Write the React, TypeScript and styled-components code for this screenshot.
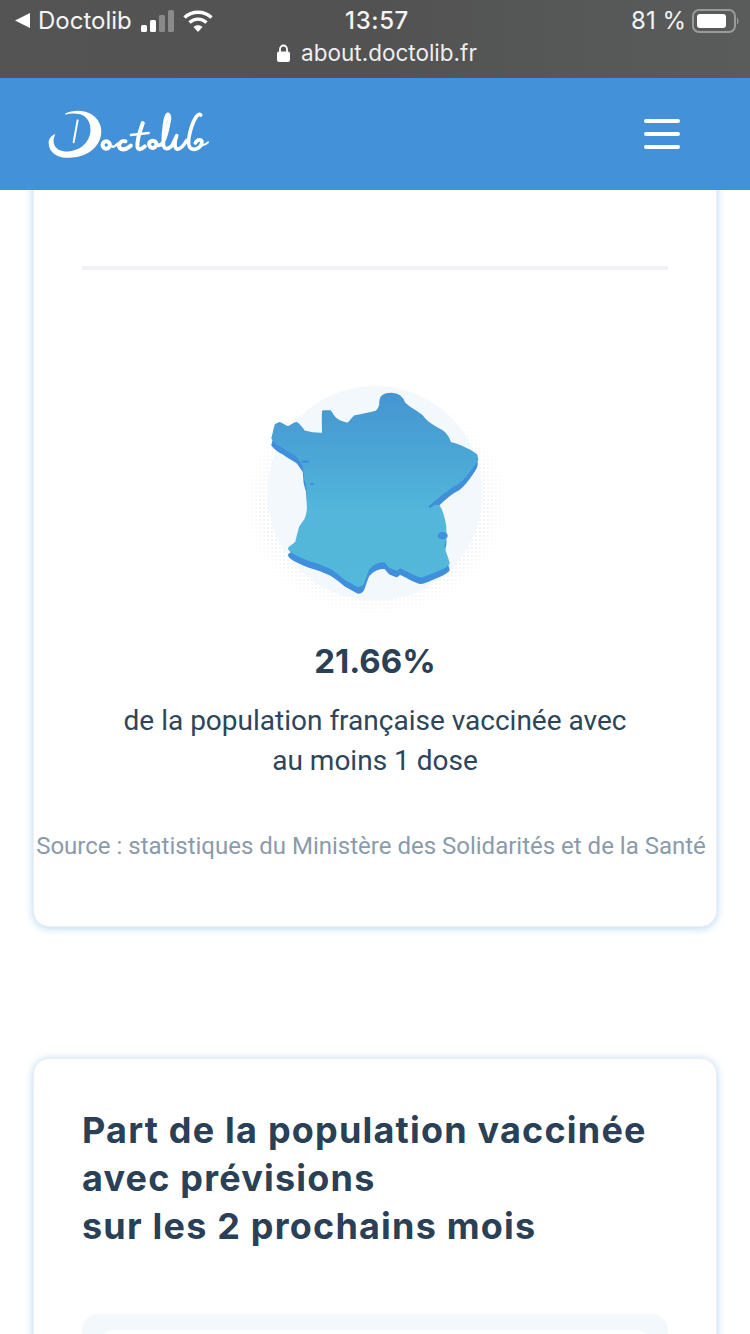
import React, { FC } from 'react';
import styled, { createGlobalStyle } from 'styled-components';

const GlobalStyle = createGlobalStyle`
	html, body {
		margin: 0;
		padding: 0;
		height: 100%;
		overflow: hidden;
		background: #fff;
	}
	* {
		box-sizing: border-box;
	}
`;

const Screen = styled.div`
	width: 750px;
	height: 1334px;
	display: flex;
	flex-direction: column;
	overflow: hidden;
	font-family: Roboto, 'Liberation Sans', sans-serif;
	background: #fff;
`;

const StatusBar = styled.div`
	height: 78px;
	flex: none;
	padding: 6px 11px 0 15px;
	color: #f4f4f4;
	background: linear-gradient(90deg, #545454, #525252 50%, #5a5c5c);
	font-family: Inter, 'Liberation Sans', sans-serif;
`;

const StatusRow = styled.div`
	display: grid;
	grid-template-columns: 1fr auto 1fr;
	align-items: center;
	height: 28px;
	font-size: 24px;
`;

const Carrier = styled.div`
	display: flex;
	align-items: center;
	gap: 8px;
`;

const Time = styled.div`
	font-weight: 500;
	letter-spacing: 0.6px;
`;

const Battery = styled.div`
	display: flex;
	align-items: center;
	justify-content: flex-end;
	gap: 6px;
`;

const AddressRow = styled.div`
	display: flex;
	align-items: center;
	justify-content: center;
	gap: 11px;
	margin-top: 5px;
	font-size: 22.5px;
	font-family: Inter, 'Liberation Sans', sans-serif;
	color: #eeeeee;
`;

const Header = styled.header`
	height: 112px;
	flex: none;
	display: flex;
	align-items: center;
	justify-content: space-between;
	padding: 0 70px 0 47px;
	background: #4291d9;
`;

const Burger = styled.div`
	display: flex;
	flex-direction: column;
	gap: 9px;
	width: 36px;
`;

const BurgerBar = styled.span`
	height: 4px;
	border-radius: 2px;
	background: #fff;
`;

const Main = styled.main`
	flex: 1;
	min-height: 0;
	overflow: hidden;
	padding: 0 33px;
`;

const Card = styled.section<{ $clipped?: boolean }>`
	margin-top: ${(p) => (p.$clipped ? '-20px' : '131px')};
	padding: ${(p) => (p.$clipped ? '95px' : '47px')} 48px 0;
	border: 1px solid #eeeef6;
	border-radius: 16px;
	background: #fff;
	box-shadow: 0 2px 8px rgba(70, 160, 225, 0.26), 0 0 7px rgba(70, 160, 225, 0.16);
`;

const Divider = styled.hr`
	height: 4px;
	margin: 0;
	border: 0;
	background: #f0f0f6;
`;

const MapHolder = styled.div`
	display: flex;
	justify-content: center;
	margin-top: 100px;
`;

const Stat = styled.p`
	margin: 20px 0 0;
	text-align: center;
	font-family: Inter, 'Liberation Sans', sans-serif;
	font-size: 33px;
	line-height: 42px;
	font-weight: 700;
	color: #2a4056;
`;

const Description = styled.p`
	margin: 19px 0 0;
	text-align: center;
	font-size: 28px;
	line-height: 40px;
	color: #2d4559;
`;

const Source = styled.p`
	margin: 50px -44px 0 -52px;
	padding-bottom: 65px;
	text-align: center;
	white-space: nowrap;
	font-size: 24px;
	line-height: 30px;
	color: #8a9bab;
`;

const Title = styled.h2`
	margin: 0;
	font-family: Inter, 'Liberation Sans', sans-serif;
	font-size: 36px;
	line-height: 48px;
	font-weight: 700;
	letter-spacing: 1.2px;
	color: #2a4056;
`;

const ChartBox = styled.div`
	height: 200px;
	margin-top: 64px;
	padding: 16px 18px 0;
	border-radius: 16px;
	background: #f3f8fc;
`;

const ChartInner = styled.div`
	height: 100%;
	border-radius: 14px;
	background: #fff;
`;

const Logo: FC = () => (
	<svg width={163} height={50} viewBox='140 330 490 150' fill='none' stroke='#fff' strokeLinecap='round' strokeLinejoin='round'>
		<path
			d='M195 343C235 325 292 338 302 385C310 432 272 472 215 476C175 480 143 462 145 428C146 418 155 408 165 405C158 420 155 440 175 452C205 466 248 452 264 420C278 392 270 355 240 346C225 342 210 342 195 347Z'
			fill='#fff'
			stroke='none'
		/>
		<path d='M232 364L220 430' strokeWidth={6} />
		<circle cx={318} cy={438} r={11} strokeWidth={12} />
		<path d='M332 440C340 448 346 440 352 434' strokeWidth={7} />
		<path d='M376 427C362 422 352 438 359 447C367 455 380 450 392 440' strokeWidth={12} />
		<path d='M428 372C418 400 410 432 412 444C414 454 424 452 434 442' strokeWidth={12} />
		<path d='M392 408L446 402' strokeWidth={7} />
		<circle cx={458} cy={436} r={11} strokeWidth={12} />
		<path d='M472 438C484 444 494 425 502 390C506 372 512 350 504 346C496 344 488 400 490 438C492 452 504 452 516 440L530 410C524 425 522 445 530 450C540 452 552 438 560 424' strokeWidth={11} />
		<path d='M602 348C594 340 582 360 574 385C566 412 562 440 572 448C584 456 604 446 606 430C606 420 592 420 586 432' strokeWidth={11} />
		<path d='M604 438C610 440 618 436 624 430' strokeWidth={6} />
	</svg>
);

const FRANCE = 'M452 95C452 80 465 72 485 72C505 72 515 80 522 100C530 110 550 120 575 138C582 150 600 165 620 175C635 182 650 190 660 220C675 222 715 238 738 255C742 265 738 275 715 305C700 325 690 335 680 340C655 350 625 385 600 408L625 408C635 420 640 440 645 470L645 490C648 505 640 515 640 530C642 545 652 565 655 580C650 590 625 598 610 605C590 612 580 620 570 618C555 615 540 605 530 600L510 590L500 598L480 590L465 572C450 572 430 578 415 595C408 610 402 630 398 640C392 648 385 648 380 645L345 625C330 612 315 600 300 592C280 582 260 575 240 570C225 565 210 558 195 550C185 545 178 540 178 535C190 525 198 520 200 515C205 495 208 480 212 470C220 458 228 450 230 440C236 425 235 410 235 400C235 385 233 360 232 345L225 320L222 285C212 270 205 258 200 255C185 245 170 238 160 230C150 225 135 215 128 205C132 190 135 175 138 165L150 160C160 165 170 172 175 172C185 168 192 160 200 160C210 165 215 178 222 185C240 190 262 193 280 192C282 170 278 145 280 125L300 125C308 135 312 145 320 150C330 156 345 162 355 162C362 155 368 145 375 140C395 135 420 132 440 125C448 118 452 108 452 95Z';

const FranceMap: FC = () => (
	<svg width={290} height={250} viewBox='0 0 870 750'>
		<defs>
			<pattern id='dots' width={12} height={12} patternUnits='userSpaceOnUse'>
				<circle cx={6} cy={6} r={2.4} fill='#d6e0e8' />
			</pattern>
			<radialGradient id='dotsFade' cx='50%' cy='50%' r='50%'>
				<stop offset='78%' stopColor='#fff' />
				<stop offset='100%' stopColor='#000' />
			</radialGradient>
			<mask id='dotsMask'>
				<ellipse cx={437} cy={400} rx={400} ry={340} fill='url(#dotsFade)' />
			</mask>
			<linearGradient id='land' x1='0' y1='0' x2='0' y2='1'>
				<stop offset='0%' stopColor='#4495d1' />
				<stop offset='60%' stopColor='#52b6da' />
				<stop offset='100%' stopColor='#52b8da' />
			</linearGradient>
			<filter id='soft' x='-5%' y='-5%' width='110%' height='110%'>
				<feGaussianBlur stdDeviation={1.8} />
			</filter>
		</defs>
		<rect x={40} y={90} width={795} height={650} fill='url(#dots)' mask='url(#dotsMask)' />
		<circle cx={435} cy={370} r={322} fill='#f3f8fc' />
		<g filter='url(#soft)'>
			<path d={FRANCE} fill='#3f8fdc' stroke='#3f8fdc' strokeWidth={8} strokeLinejoin='round' transform='translate(0 20)' />
			<path d='M738 268L704 322L686 352L646 374L604 412' fill='none' stroke='#3f8fdc' strokeWidth={14} strokeLinecap='round' />
			<path d={FRANCE} fill='url(#land)' stroke='url(#land)' strokeWidth={8} strokeLinejoin='round' />
			<path d='M600 410L646 372' fill='none' stroke='#3f8fdc' strokeWidth={8} strokeLinecap='round' />
			<ellipse cx={226} cy={275} rx={12} ry={4} fill='#3f8fdc' />
			<ellipse cx={246} cy={343} rx={7} ry={3} fill='#3f8fdc' />
			<ellipse cx={638} cy={497} rx={15} ry={11} fill='#3f8fdc' />
		</g>
	</svg>
);

const App: FC = () => (
	<Screen>
		<GlobalStyle />
		<StatusBar>
			<StatusRow>
				<Carrier>
					<svg width={15} height={15} viewBox='0 0 15 15'>
						<path d='M15 0V15L0 7.5Z' fill='#fff' />
					</svg>
					<span>Doctolib</span>
					<svg width={33} height={22} viewBox='0 0 33 22' style={{ marginLeft: 1 }}>
						<rect x={0} y={15} width={6} height={7} rx={1.5} fill='#fff' />
						<rect x={9} y={10} width={6} height={12} rx={1.5} fill='#fff' />
						<rect x={18} y={5} width={6} height={17} rx={1.5} fill='#8a8a8a' />
						<rect x={27} y={0} width={6} height={22} rx={1.5} fill='#8a8a8a' />
					</svg>
					<svg width={30} height={22} viewBox='0 0 30 22' fill='none' stroke='#fff' strokeWidth={3.4} style={{ marginLeft: 1 }}>
						<path d='M1.5 7.5C9 0.5 21 0.5 28.500 7.5' />
						<path d='M6.500 12.500C11.500 8 18.500 8 23.500 12.500' />
						<path d='M15 22L10.500 17C13 14.600 17 14.600 19.500 17Z' fill='#fff' stroke='none' />
					</svg>
				</Carrier>
				<Time>13:57</Time>
				<Battery>
					<span>81 %</span>
					<svg width={47} height={24} viewBox='0 0 47 24'>
						<rect x={1} y={1} width={42} height={22} rx={6} fill='none' stroke='#9a9a9a' strokeWidth={2} />
						<rect x={5} y={5} width={29} height={14} rx={3} fill='#fff' />
						<path d='M45 8.500C47 9.500 47 14.500 45 15.500Z' fill='#9a9a9a' />
					</svg>
				</Battery>
			</StatusRow>
			<AddressRow>
				<svg width={13} height={18} viewBox='0 0 13 18'>
					<path d='M3 8V5a3.500 3.500 0 0 1 7 0v3' fill='none' stroke='#fff' strokeWidth={1.8} />
					<rect x={0} y={7.500} width={13} height={10.500} rx={2} fill='#fff' />
				</svg>
				<span>about.doctolib.fr</span>
			</AddressRow>
		</StatusBar>
		<Header>
			<Logo />
			<Burger>
				<BurgerBar />
				<BurgerBar />
				<BurgerBar />
			</Burger>
		</Header>
		<Main>
			<Card $clipped>
				<Divider />
				<MapHolder>
					<FranceMap />
				</MapHolder>
				<Stat>21.66%</Stat>
				<Description>
					de la population française vaccinée avec
					<br />
					au moins 1 dose
				</Description>
				<Source>Source : statistiques du Ministère des Solidarités et de la Santé</Source>
			</Card>
			<Card>
				<Title>
					Part de la population vaccinée
					<br />
					avec prévisions
					<br />
					sur les 2 prochains mois
				</Title>
				<ChartBox>
					<ChartInner />
				</ChartBox>
			</Card>
		</Main>
	</Screen>
);

export default App;
